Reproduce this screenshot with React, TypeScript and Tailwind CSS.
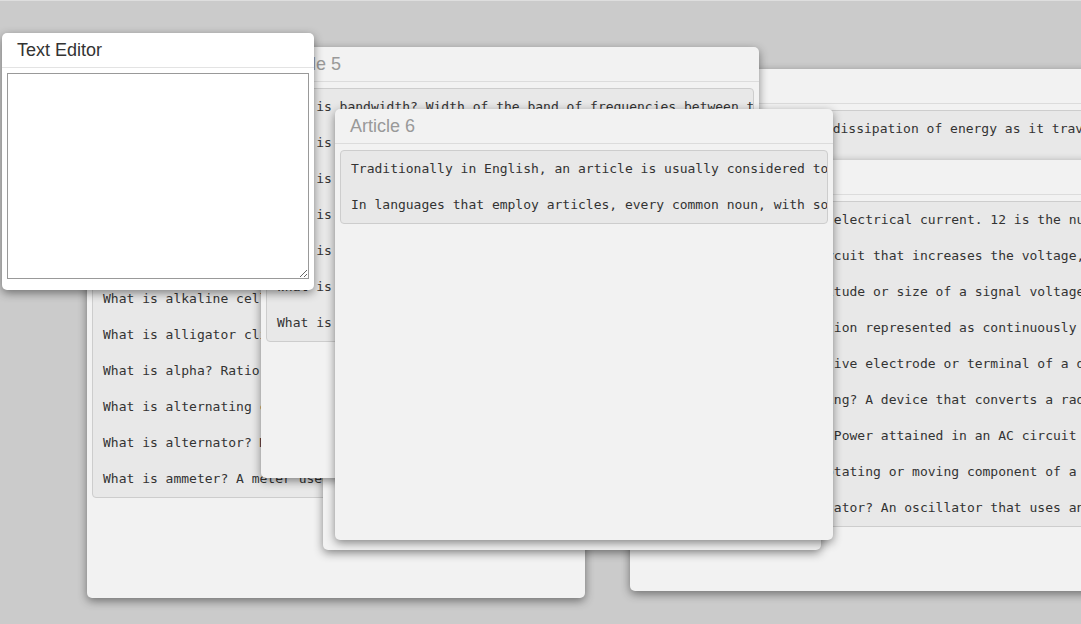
import React from 'react';

interface ArticleWindow {
  id: number;
  title: string;
  pos: string;
  lines: string[];
}

// windows listed back to front; pos is the window's spot on the desktop
const WINDOWS: ArticleWindow[] = [
  {
    id: 1,
    title: 'Article 1',
    pos: 'left-[87px] top-[166px]',
    lines: [
      'What is AC? Alternating current, a current that periodically reverses direction.',
      'What is active component? A component that can amplify or control current.',
      'What is alkaline cell? A primary cell that uses an alkaline electrolyte.',
      'What is alligator clip? A spring clip with long jaws used for temporary connections.',
      'What is alpha? Ratio of collector current to emitter current in a transistor.',
      'What is alternating current? Current that reverses direction at regular intervals.',
      'What is alternator? Machine that generates alternating current.',
      'What is ammeter? A meter used to measure current.',
    ],
  },
  {
    id: 2,
    title: 'Article 2',
    pos: 'left-[621px] top-[68px]',
    lines: [
      'What is attenuation? The dissipation of energy as it travels through a medium.',
      '',
      '',
      'What is autotransformer? A transformer with a single tapped winding.',
    ],
  },
  {
    id: 3,
    title: 'Article 3',
    pos: 'left-[630px] top-[159px]',
    lines: [
      'What is ampere? Unit of electrical current. 12 is the number of amperes flowing.',
      'What is amplifier? A circuit that increases the voltage, current, or power of a signal.',
      'What is amplitude? Magnitude or size of a signal voltage or current.',
      'What is analog? Information represented as continuously variable values.',
      'What is anode? The positive electrode or terminal of a device.',
      'What is the antenna tuning? A device that converts a radio signal into current.',
      'What is apparent power? Power attained in an AC circuit as the product of V and I.',
      'What is armature? The rotating or moving component of a motor or generator.',
      'What is Armstrong oscillator? An oscillator that uses an inductive feedback coil.',
    ],
  },
  {
    id: 4,
    title: 'Article 4',
    pos: 'left-[323px] top-[118px]',
    lines: [
      'What is astable multivibrator? A circuit with no stable state.',
      'What is attenuator? A network that reduces signal level.',
    ],
  },
  {
    id: 5,
    title: 'Article 5',
    pos: 'left-[261px] top-[46px]',
    lines: [
      'What is bandwidth? Width of the band of frequencies between the half power points.',
      'What is base? The region between emitter and collector of a transistor.',
      'What is battery? Two or more cells connected together.',
      'What is beta? Ratio of collector current to base current.',
      'What is bias? A voltage applied to set the operating point.',
      'What is bipolar transistor? A transistor using both electrons and holes.',
      'What is breadboard? A board used for prototyping circuits.',
    ],
  },
  {
    id: 6,
    title: 'Article 6',
    pos: 'left-[335px] top-[108px]',
    lines: [
      'Traditionally in English, an article is usually considered to be a type of adjective.',
      'In languages that employ articles, every common noun, with some exceptions, is expressed with a certain definiteness.',
    ],
  },
];

function Article({ win }: { win: ArticleWindow }) {
  return (
    <div
      className={
        'absolute w-[498px] h-[431px] bg-[#f2f2f2] rounded-[5px] shadow-[0_3px_10px_rgba(0,0,0,0.45)] overflow-hidden ' +
        win.pos
      }
    >
      <div className="h-[35px] flex items-center px-[15px] border-b border-[#dcdcdc] text-[18px] text-[#999] font-['Liberation_Sans',Arial,sans-serif]">
        {win.title}
      </div>
      <pre className="mx-[5px] mt-[6px] px-[10px] py-[9px] bg-[#e8e8e8] border border-[#cdcdcd] rounded-[4px] text-[13px] leading-[18px] text-[#333] whitespace-pre overflow-hidden font-['DejaVu_Sans_Mono','Liberation_Mono',monospace]">
        {win.lines.join('\n\n')}
      </pre>
    </div>
  );
}

export default function App() {
  return (
    <div className="relative w-[1081px] h-[624px] bg-[#cbcbcb] border-t border-[#dedede] overflow-hidden">
      {WINDOWS.map((w) => (
        <Article key={w.id} win={w} />
      ))}

      {/* Text editor, front window */}
      <div className="absolute left-[2px] top-[32px] w-[312px] h-[257px] bg-white rounded-[5px] shadow-[0_3px_10px_rgba(0,0,0,0.45)]">
        <div className="h-[35px] flex items-center px-[15px] border-b border-[#e3e3e3] text-[18px] text-[#333] font-['Liberation_Sans',Arial,sans-serif]">
          Text Editor
        </div>
        <textarea className="block mx-[5px] mt-[5px] w-[302px] h-[206px] border border-[#999] bg-white resize" />
      </div>
    </div>
  );
}
